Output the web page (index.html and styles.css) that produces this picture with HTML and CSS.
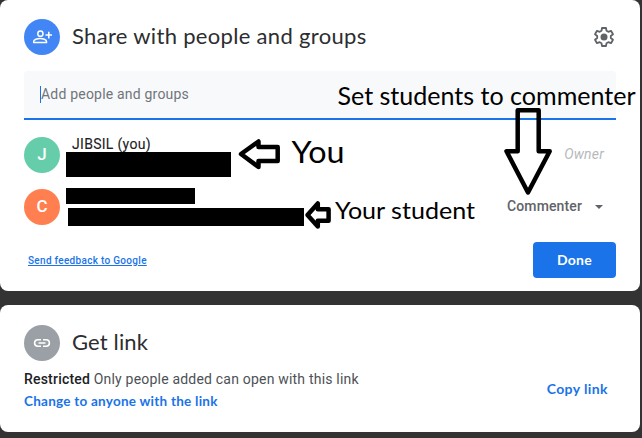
FILE: index.html
```html
<!DOCTYPE html>
<html lang="en">
<head>
<meta charset="utf-8">
<title>Share with people and groups</title>
<link rel="stylesheet" href="styles.css">
</head>
<body>
<main class="page">
  <section class="card share">
    <header class="head">
      <span class="avatar blue">
        <svg width="20" height="20" viewBox="0 0 20 20" fill="none" stroke="#fff" stroke-width="1.5"><circle cx="8.4" cy="6.7" r="2.6"/><path d="M1.700 15.500v-1.200c0-1.700 3.700-2.700 6.400-2.700s6.400 1 6.400 2.700v1.200z"/><path d="M16.8 4.800v6.600M13.500 8.100h6.600"/></svg>
      </span>
      <h1 class="title">Share with people and groups</h1>
      <svg class="gear" width="24" height="24" viewBox="0 0 24 24"><path fill="none" stroke="#5f6368" stroke-width="1.8" stroke-linejoin="round" d="M10 3h4l.5 2.8 1.8 1 2.7-1 2 3.4-2.2 1.8v2l2.2 1.8-2 3.400-2.700-1-1.800 1L14 21h-4l-.5-2.800-1.800-1-2.700 1-2-3.400L5.200 13v-2L3 9.200l2-3.400 2.700 1 1.800-1z"/><circle cx="12" cy="12" r="3.500" fill="#5f6368"/></svg>
    </header>
    <div class="field"><span class="caret"></span><span class="placeholder">Add people and groups</span></div>
    <div class="person">
      <span class="avatar green">J</span>
      <div class="details"><span class="name">JIBSIL (you)</span><span class="redact email-one"></span></div>
      <span class="owner">Owner</span>
    </div>
    <div class="person second">
      <span class="avatar orange">C</span>
      <div class="details"><span class="redact name-two"></span><span class="redact email-two"></span></div>
      <span class="role">Commenter<span class="triangle"></span></span>
    </div>
    <footer class="foot"><a class="feedback">Send feedback to Google</a><button class="done">Done</button></footer>
  </section>
  <section class="card link">
    <header class="head">
      <span class="avatar gray">
        <svg width="18" height="18" viewBox="0 0 18 18" fill="none" stroke="#fff" stroke-width="1.600"><path d="M8 5.700H4.900a3.300 3.300 0 0 0 0 6.600H8M10 5.700h3.100a3.300 3.300 0 0 1 0 6.600H10M5.500 9h7"/></svg>
      </span>
      <h2 class="title get">Get link</h2>
    </header>
    <div class="access">
      <div>
        <p class="scope"><b>Restricted</b> <span>Only people added can open with this link</span></p>
        <a class="change">Change to anyone with the link</a>
      </div>
      <a class="copy">Copy link</a>
    </div>
  </section>
</main>
<svg class="notes" width="642" height="438" viewBox="0 0 642 438">
  <g fill="#fff" stroke="#000" stroke-width="4.500" stroke-linejoin="round">
    <path fill="none" d="M517.700 110.300h21v41h11L528 192.500 506.500 151.300h11.200z"/>
    <path d="M241 154l17.500-12.500v5.500h19.200v14h-19.200v6z"/>
    <path d="M307.500 215l10.300-11.500v5.800h10.800v11.500h-10.800v5.700z"/>
  </g>
  <g class="note-text">
    <text x="337.500" y="105" font-size="24.500" textLength="298" lengthAdjust="spacingAndGlyphs">Set students to commenter</text>
    <text x="291.500" y="163" font-size="30.500" textLength="53" lengthAdjust="spacingAndGlyphs">You</text>
    <text x="335" y="219" font-size="24" textLength="140" lengthAdjust="spacingAndGlyphs">Your student</text>
  </g>
</svg>
</body>
</html>
```

FILE: styles.css
```css
* { box-sizing: border-box; }
body { margin: 0; width: 642px; height: 438px; overflow: hidden; background: #333; font-family: Roboto, "Liberation Sans", sans-serif; color: #202124; }
.page { display: flex; flex-direction: column; gap: 14px; width: 640px; }
.card { background: #fff; border-radius: 8px; padding: 19px 24px 0; }
.share { height: 291px; }
.link { height: 127px; padding-top: 20px; }
.head { display: flex; align-items: center; height: 36px; }
.avatar { width: 36px; height: 36px; flex: none; border-radius: 50%; display: flex; align-items: center; justify-content: center; color: #fff; font-size: 17px; font-weight: 500; line-height: 20px; }
.person .avatar { padding-bottom: 2px; }
.blue { background: #4285f4; }
.green { background: #66cdaa; }
.orange { background: #ff7f50; }
.gray { background: #9aa0a6; }
.title { margin: 0 0 2px 12px; font: 400 22px/28px Lato, sans-serif; letter-spacing: .32px; white-space: nowrap; color: #2c2d30; }
.get { letter-spacing: .15px; }
.gear { margin-left: auto; }
.field { margin-top: 16px; height: 49px; display: flex; align-items: center; padding: 0 16px; background: #f8f9fa; border-bottom: 2px solid #1a73e8; border-radius: 4px 4px 0 0; }
.caret { width: 1px; height: 17px; background: #1a73e8; }
.placeholder { margin-bottom: 2px; color: #70757a; font-size: 14px; letter-spacing: .2px; }
.person { display: flex; align-items: center; height: 36px; margin-top: 17px; }
.second { margin-top: 16px; }
.details { display: flex; flex-direction: column; align-self: flex-start; margin-left: 6px; }
.name { height: 15px; margin-left: 6px; font-size: 14px; line-height: 14px; font-weight: 400; letter-spacing: .3px; -webkit-text-stroke: .1px; }
.redact { background: #000; }
.email-one { width: 165px; height: 25px; }
.name-two { width: 129px; height: 16px; margin-top: -1px; }
.email-two { width: 236px; height: 18px; margin: 4px 0 0 2px; }
.owner { margin: 0 12px 2px auto; font-size: 14px; font-style: italic; letter-spacing: .2px; color: #b7b9bb; }
.role { margin: 0 13px 2px auto; display: flex; align-items: center; gap: 13px; color: #5f6368; font-size: 14px; font-weight: 500; letter-spacing: .12px; }
.triangle { border: 4px solid transparent; border-top-color: #5f6368; border-bottom: 0; margin-top: 1px; }
.foot { display: flex; align-items: center; justify-content: space-between; margin-top: 17px; height: 36px; padding-left: 4px; }
.feedback { color: #1a73e8; font-size: 10px; font-weight: 500; text-decoration: underline; letter-spacing: .3px; }
.done { width: 83px; height: 36px; padding-bottom: 2px; border: 0; border-radius: 4px; background: #1a73e8; color: #fff; font: 700 14px Lato, sans-serif; letter-spacing: .3px; }
.access { display: flex; justify-content: space-between; align-items: center; height: 44px; margin-top: 7px; padding-right: 8px; }
.scope { margin: 0 0 2px; font-size: 14px; line-height: 20px; letter-spacing: .2px; color: #4d5156; white-space: nowrap; }
.scope b { color: #202124; font-weight: 500; }
.change, .copy { color: #1a73e8; font: 700 13.5px/20px Lato, sans-serif; letter-spacing: .25px; display: block; }
.copy { margin-bottom: 2px; font-size: 14px; letter-spacing: .4px; }
.notes { position: absolute; left: 0; top: 0; }
.note-text { font-family: Lato, sans-serif; fill: #000; }
```
